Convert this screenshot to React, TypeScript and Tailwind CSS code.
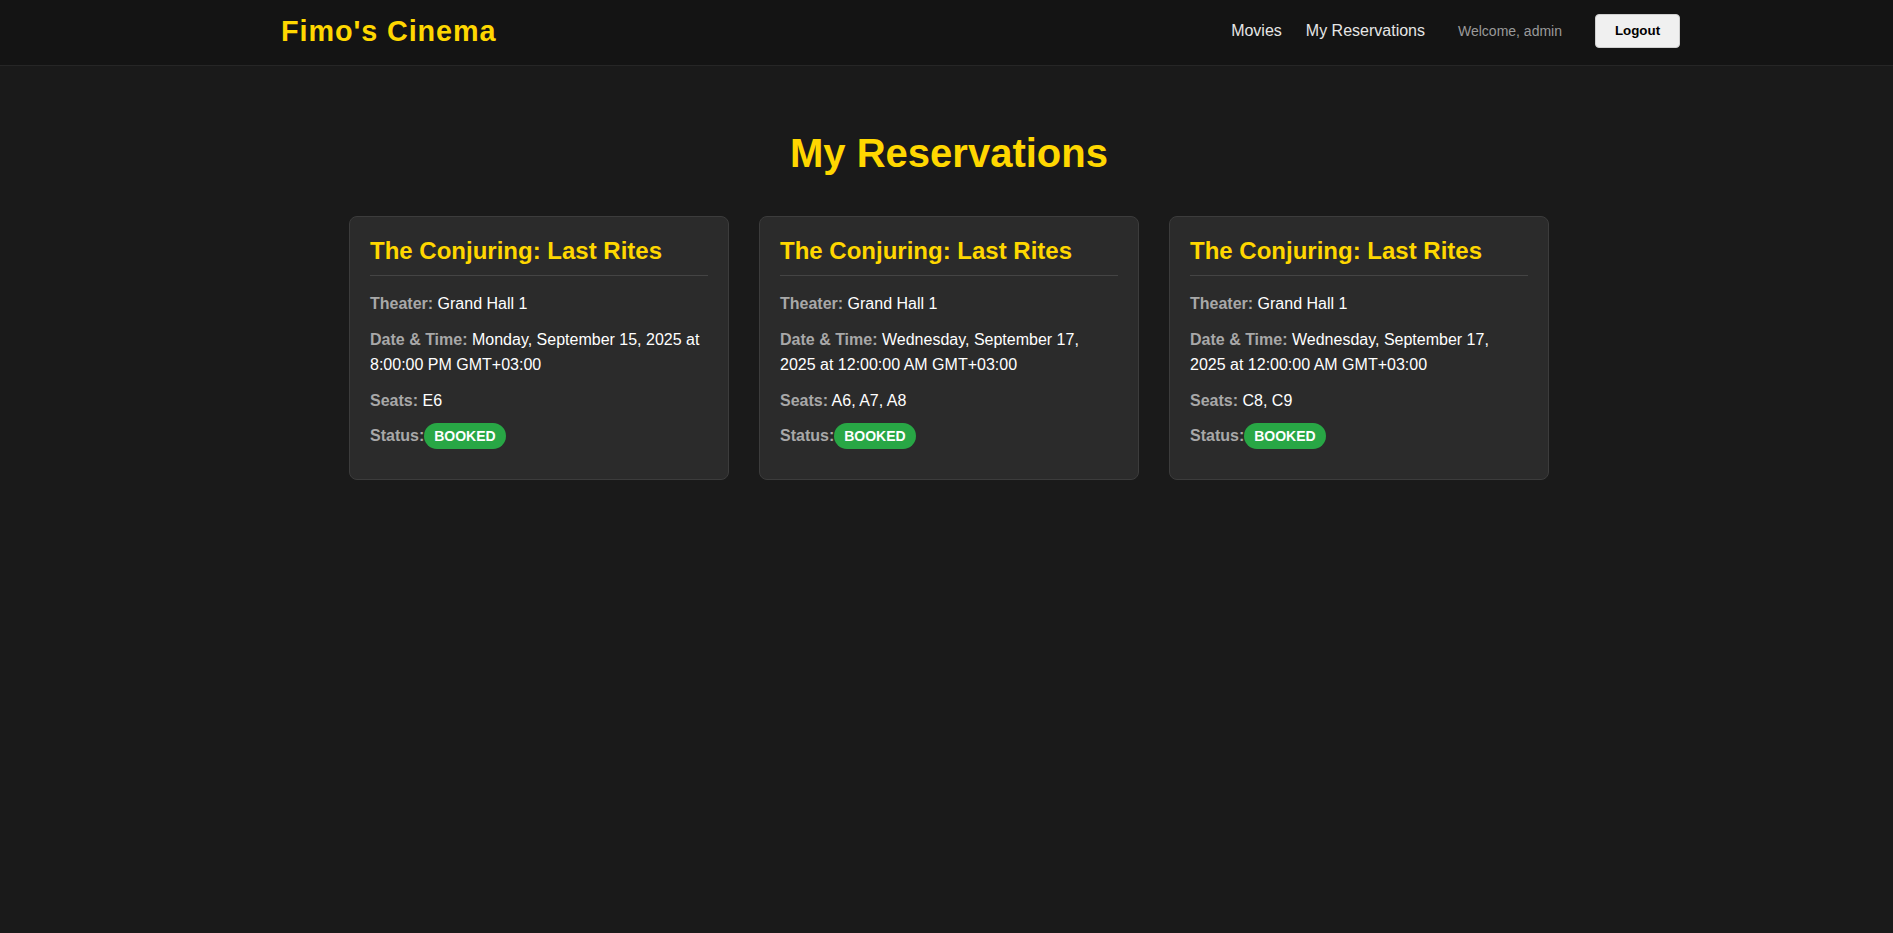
import React from "react";

type Reservation = {
  title: string;
  theater: string;
  date: string;
  seats: string;
  status: string;
};

const reservations: Reservation[] = [
  {
    title: "The Conjuring: Last Rites",
    theater: "Grand Hall 1",
    date: "Monday, September 15, 2025 at 8:00:00 PM GMT+03:00",
    seats: "E6",
    status: "booked",
  },
  {
    title: "The Conjuring: Last Rites",
    theater: "Grand Hall 1",
    date: "Wednesday, September 17, 2025 at 12:00:00 AM GMT+03:00",
    seats: "A6, A7, A8",
    status: "booked",
  },
  {
    title: "The Conjuring: Last Rites",
    theater: "Grand Hall 1",
    date: "Wednesday, September 17, 2025 at 12:00:00 AM GMT+03:00",
    seats: "C8, C9",
    status: "booked",
  },
];

function Card({ r }: { r: Reservation }) {
  return (
    <div className="w-[380px] rounded-[8px] border border-[#3c3c3c] bg-[#2b2b2b] p-[20px]">
      <h3 className="mb-[15px] border-b border-[#444444] pb-[10px] text-[24px] font-bold leading-[normal] text-[#ffd700]">
        {r.title}
      </h3>
      <p className="my-[10px] text-[16px] leading-[1.6] text-white">
        <strong className="font-bold text-[#a8a8a8]">Theater:</strong> {r.theater}
      </p>
      <p className="my-[10px] text-[16px] leading-[1.6] text-white">
        <strong className="font-bold text-[#a8a8a8]">Date &amp; Time:</strong> {r.date}
      </p>
      <p className="my-[10px] text-[16px] leading-[1.6] text-white">
        <strong className="font-bold text-[#a8a8a8]">Seats:</strong> {r.seats}
      </p>
      <p className="my-[10px] text-[16px] leading-[1.6] text-white">
        <strong className="font-bold text-[#a8a8a8]">Status:</strong>
        <span className="rounded-full bg-[#28a745] px-[10px] py-[5px] text-[14px] font-bold uppercase leading-[normal] text-white">
          {r.status}
        </span>
      </p>
    </div>
  );
}

export default function App() {
  return (
    <div
      className="min-h-[933px] bg-[#1a1a1a] text-white"
      style={{ fontFamily: '"Liberation Sans", Arial, sans-serif' }}
    >
      <header className="border-b border-[#262626] bg-[#141414] pb-[17px] pl-[281px] pr-[213px] pt-[14px]">
        <div className="flex h-[34px] items-center justify-between">
          <div className="text-[28.8px] font-bold leading-[normal] tracking-[0.9px] text-[#ffd700]">
            Fimo's Cinema
          </div>
          <nav className="flex items-center">
            <a className="text-[16px] leading-[normal] text-[#e6e6e6]">Movies</a>
            <a className="ml-[24px] text-[16px] leading-[normal] text-[#e6e6e6]">My Reservations</a>
            <span className="ml-[33px] text-[14px] leading-[normal] text-[#9a9a9a]">Welcome, admin</span>
            <button className="ml-[33px] flex h-[34px] w-[85px] items-center justify-center rounded-[4px] border border-[#cfcfcf] bg-[#f0f0f0] text-[13.33px] font-bold text-black">
              Logout
            </button>
          </nav>
        </div>
      </header>
      <main className="pl-[5px] pt-[65px]">
        <h2 className="text-center text-[40px] font-bold leading-[normal] text-[#ffd700]">
          My Reservations
        </h2>
        <div className="mt-[40px] flex items-start justify-center gap-[30px]">
          {reservations.map((r, i) => (
            <Card key={i} r={r} />
          ))}
        </div>
      </main>
    </div>
  );
}
